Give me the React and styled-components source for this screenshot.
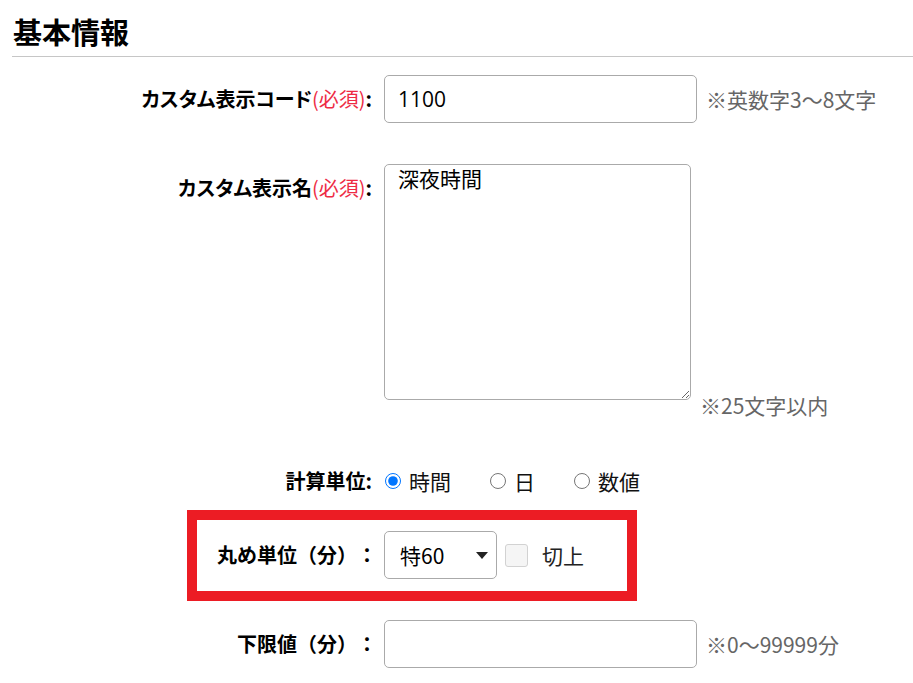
import React from 'react'
import styled, { createGlobalStyle } from 'styled-components'

const GlobalStyle = createGlobalStyle`
  html, body {
    margin: 0;
    padding: 0;
    background: #fff;
  }
  body {
    font-family: "Noto Sans CJK JP", "Noto Sans", sans-serif;
    color: #000;
    text-spacing-trim: space-all;
  }
`

const Page = styled.div`
  width: 913px;
  box-sizing: border-box;
  padding-left: 12px;
`

const Heading = styled.h2`
  margin: 0;
  padding: 12px 0 5px 1px;
  font-size: 29px;
  line-height: 39px;
  font-weight: 700;
  border-bottom: 1px solid #c6c6c6;
`

const Row = styled.div`
  display: grid;
  grid-template-columns: 360px 1fr;
  column-gap: 12px;
  align-items: start;
  margin-top: ${p => p.$mt || 0}px;
`

const Highlight = styled.div`
  display: grid;
  grid-template-columns: 175px 1fr;
  column-gap: 12px;
  align-items: center;
  box-sizing: border-box;
  width: 450px;
  margin: 5px 0 0 175px;
  padding: 11px 0 12px;
  border: 10px solid #ec1c24;
`

const Label = styled.div`
  margin-right: ${p => (p.$wideColon ? -5 : 0)}px;
  font-size: 20px;
  font-weight: 700;
  line-height: 48px;
  text-align: right;
  white-space: nowrap;
  font-feature-settings: ${p => (p.$palt ? '"palt"' : 'normal')};
`

const Required = styled.span`
  color: #ee2c45;
  font-weight: 400;
`

const Field = styled.div`
  display: flex;
  align-items: ${p => p.$align || 'center'};
  min-height: 48px;
`

const TextInput = styled.input`
  box-sizing: border-box;
  width: 313px;
  height: 48px;
  padding: 0 13px;
  border: 1px solid #aaa;
  border-radius: 5px;
  font-family: "Open Sans", "Noto Sans CJK JP", sans-serif;
  font-size: 21px;
  color: #000;
  background: #fff;
  outline: none;
`

const TextArea = styled.textarea`
  box-sizing: border-box;
  width: 307px;
  height: 236px;
  padding: 1px 13px;
  border: 1px solid #aaa;
  border-radius: 5px;
  font: inherit;
  font-size: 21px;
  line-height: 1.2;
  color: #000;
  outline: none;
  resize: both;
`

const Hint = styled.span`
  margin-left: 9px;
  margin-bottom: ${p => (p.$drop ? -16 : 0)}px;
  font-size: 21px;
  line-height: 21px;
  color: #666;
  white-space: nowrap;
`

const Options = styled.div`
  display: flex;
  align-items: center;
  height: 48px;
`

const Option = styled.label`
  display: flex;
  align-items: center;
  gap: 8px;
  margin-right: 38px;
  font-size: 21px;
  color: #111;
`

const Radio = styled.input.attrs({ type: 'radio', name: 'unit' })`
  width: 16px;
  height: 16px;
  margin: 0 0 0 1px;
`

const SelectWrap = styled.div`
  position: relative;
  &::after {
    content: '';
    position: absolute;
    right: 9px;
    top: 50%;
    margin-top: -3px;
    border-left: 6px solid transparent;
    border-right: 6px solid transparent;
    border-top: 7px solid #222;
    pointer-events: none;
  }
`

const Select = styled.select`
  appearance: none;
  box-sizing: border-box;
  width: 113px;
  height: 48px;
  padding: 0 0 0 15px;
  border: 1px solid #aaa;
  border-radius: 5px;
  font: inherit;
  font-size: 21px;
  color: #000;
  background: #fff;
  outline: none;
`

const Check = styled.input.attrs({ type: 'checkbox', disabled: true })`
  appearance: none;
  box-sizing: border-box;
  width: 23px;
  height: 23px;
  margin: 0 0 0 8px;
  border: 1px solid #d2d2d2;
  border-radius: 3px;
  background: #f5f5f5;
`

const CheckText = styled.span`
  margin-left: 14px;
  font-size: 21px;
  color: #222;
`

const App = () => {
  return (
    <Page>
      <GlobalStyle />
      <Heading>基本情報</Heading>

      <Row $mt={18}>
        <Label $palt>カスタム表示コード<Required>(必須)</Required>:</Label>
        <Field>
          <TextInput defaultValue="1100" />
          <Hint>※英数字3～8文字</Hint>
        </Field>
      </Row>

      <Row $mt={41}>
        <Label $palt>カスタム表示名<Required>(必須)</Required>:</Label>
        <Field $align="flex-end">
          <TextArea defaultValue="深夜時間" />
          <Hint $drop>※25文字以内</Hint>
        </Field>
      </Row>

      <Row $mt={57}>
        <Label>計算単位:</Label>
        <Options>
          <Option><Radio defaultChecked />時間</Option>
          <Option><Radio />日</Option>
          <Option><Radio />数値</Option>
        </Options>
      </Row>

      <Highlight>
        <Label $wideColon>丸め単位（分）：</Label>
        <Field>
          <SelectWrap>
            <Select defaultValue="60">
              <option value="60">特60</option>
            </Select>
          </SelectWrap>
          <Check />
          <CheckText>切上</CheckText>
        </Field>
      </Highlight>

      <Row $mt={19}>
        <Label $wideColon>下限値（分）：</Label>
        <Field>
          <TextInput />
          <Hint>※0～99999分</Hint>
        </Field>
      </Row>
    </Page>
  )
}

export default App
